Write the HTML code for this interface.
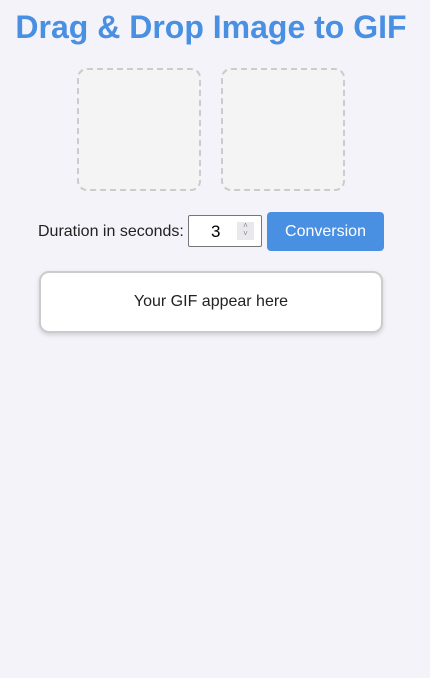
<!DOCTYPE html>
<html><head><style>
html,body{margin:0;padding:0;background:#f4f3f9;width:430px;height:678px;overflow:hidden;font-family:"Liberation Sans",Arial,sans-serif;}
h1{position:absolute;left:-4px;width:430px;top:9px;margin:0;text-align:center;font-size:32px;font-weight:bold;color:#4a90e2;line-height:36px;}
.box{position:absolute;top:68px;width:120px;height:119px;border:2px dashed #ccc;border-radius:10px;background:#f4f4f5;}
.lbl{position:absolute;left:38px;top:223px;font-size:16px;color:#222;}
.inp{position:absolute;left:188px;top:215px;width:72px;height:30px;border:1px solid #767676;background:#fff;border-radius:2px;}
.inp span{position:absolute;left:22px;top:6px;font-size:17px;color:#000;}
.spin{position:absolute;left:48px;top:6px;width:17px;height:18px;background:#e9e9ed;color:#888;font-size:8px;line-height:8px;text-align:center;}
.btn{position:absolute;left:267px;top:212px;width:117px;height:39px;background:#4a90e2;border-radius:4px;color:#fff;font-size:16px;text-align:center;line-height:39px;}
.out{position:absolute;left:39px;top:271px;width:340px;height:58px;border:2px solid #ccc;border-radius:10px;background:#fff;box-shadow:0 2px 5px rgba(0,0,0,.15);text-align:center;line-height:58px;font-size:16px;color:#222;}
</style></head><body>
<h1>Drag &amp; Drop Image to GIF</h1>
<div class="box" style="left:77px"></div>
<div class="box" style="left:221px"></div>
<div class="lbl">Duration in seconds:</div>
<div class="inp"><span>3</span><div class="spin">&#x2C4;<br>&#x2C5;</div></div>
<div class="btn">Conversion</div>
<div class="out">Your GIF appear here</div>
</body></html>
